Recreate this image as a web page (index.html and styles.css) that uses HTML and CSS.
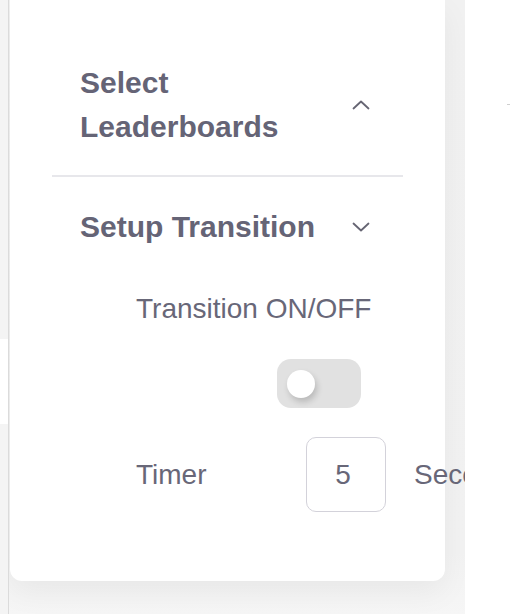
FILE: index.html
```html
<!DOCTYPE html>
<html lang="en">
<head>
<meta charset="utf-8">
<title>Settings</title>
<link rel="stylesheet" href="styles.css">
</head>
<body>
<div class="page">
  <aside class="left-strip">
    <div class="strip-gray strip-top"></div>
    <div class="strip-white"></div>
    <div class="strip-gray strip-rest"></div>
  </aside>
  <main class="main">
    <section class="card">
      <div class="acc-head acc-first">
        <h2 class="acc-title">Select Leaderboards</h2>
        <svg class="chev" width="18" height="10" viewBox="0 0 18 10"><polyline points="1.5,8.5 9,1.5 16.5,8.5" fill="none" stroke="#666573" stroke-width="1.8" stroke-linecap="round" stroke-linejoin="round"/></svg>
      </div>
      <div class="divider"></div>
      <div class="acc-head acc-second">
        <h2 class="acc-title">Setup Transition</h2>
        <svg class="chev" width="18" height="10" viewBox="0 0 18 10"><polyline points="1.5,1.5 9,8.5 16.5,1.5" fill="none" stroke="#666573" stroke-width="1.8" stroke-linecap="round" stroke-linejoin="round"/></svg>
      </div>
      <div class="acc-body">
        <div class="label">Transition ON/OFF</div>
        <div class="toggle"><span class="knob"></span></div>
        <div class="timer-row">
          <span class="label timer-label">Timer</span>
          <input class="num" type="text" value="5" readonly>
          <span class="label">Seconds</span>
        </div>
      </div>
    </section>
  </main>
  <aside class="right-panel">
    <span class="dash"></span>
  </aside>
</div>
</body>
</html>
```
FILE: styles.css
```css
html, body {
  margin: 0;
  padding: 0;
  height: 614px;
  overflow: hidden;
  background: #ffffff;
  font-family: "Liberation Sans", Arial, sans-serif;
}

.page {
  display: flex;
  height: 614px;
}

.left-strip {
  width: 8px;
  flex: none;
  display: flex;
  flex-direction: column;
  border-right: 1px solid #dbdbdb;
}

.strip-gray { background: #f4f4f4; }
.strip-top { height: 339px; }
.strip-white { height: 85px; background: #ffffff; }
.strip-rest { flex: 1; }

.main {
  width: 456px;
  flex: none;
  background: linear-gradient(180deg, #f1f1f1 0%, #f2f2f2 90%, #f6f6f6 100%);
  overflow: hidden;
  padding-left: 1px;
  box-sizing: border-box;
}

.card {
  width: 435px;
  height: 581px;
  box-sizing: border-box;
  background: #ffffff;
  border-radius: 0 0 12px 12px;
  box-shadow: 0 12px 30px rgba(0, 0, 0, 0.05);
  padding: 61px 42px 0 42px;
  white-space: nowrap;
}

.acc-head {
  display: flex;
  align-items: center;
  justify-content: space-between;
  padding: 0 33px 0 28px;
}

.acc-first { padding-bottom: 26px; }
.acc-second { margin-top: 28px; }

.acc-title {
  margin: 0;
  width: 240px;
  white-space: normal;
  font-size: 30px;
  line-height: 44px;
  font-weight: 700;
  color: #656476;
}

.chev { flex: none; display: block; }

.divider {
  height: 2px;
  background: #e7e7eb;
}

.acc-body {
  padding-left: 84px;
  padding-top: 44px;
}

.label {
  font-size: 28px;
  line-height: 32px;
  color: #686778;
}

.toggle {
  margin-top: 34px;
  margin-left: 141px;
  width: 84px;
  height: 49px;
  border-radius: 14px;
  background: #e1e1e1;
  display: flex;
  align-items: center;
  padding-left: 10px;
  box-sizing: border-box;
}

.knob {
  width: 28px;
  height: 28px;
  border-radius: 50%;
  background: #ffffff;
  box-shadow: 2px 4px 6px rgba(0, 0, 0, 0.18);
}

.timer-row {
  margin-top: 29px;
  display: flex;
  align-items: center;
}

.timer-label { width: 170px; flex: none; }

.num {
  width: 80px;
  height: 75px;
  box-sizing: border-box;
  border: 1.5px solid #d3d2da;
  border-radius: 10px;
  background: #ffffff;
  font-family: "Liberation Sans", Arial, sans-serif;
  font-size: 28px;
  color: #686778;
  text-align: center;
  padding: 0 6px 0 0;
  margin-right: 28px;
  outline: none;
}

.right-panel {
  flex: 1;
  background: #ffffff;
  position: relative;
  z-index: 1;
}

.dash {
  display: block;
  margin: 104px 0 0 42px;
  width: 4px;
  height: 1px;
  background: #cfcfcf;
}
```
